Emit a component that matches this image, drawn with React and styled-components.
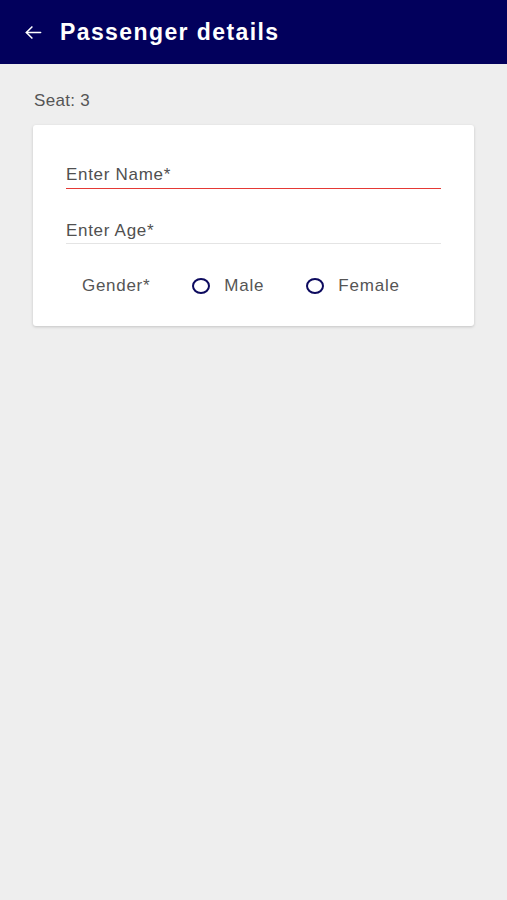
import React from "react";
import styled, { createGlobalStyle } from "styled-components";

const GlobalStyle = createGlobalStyle`
    html, body {
        margin: 0;
        padding: 0;
        background: #eeeeee;
        font-family: "Liberation Sans", Arial, sans-serif;
    }
`;

const Page = styled.div`
    min-height: 900px;
    background: #eeeeee;
`;

const Header = styled.header`
    height: 64px;
    background: #02005c;
    display: flex;
    align-items: center;
    padding: 0 0 0 23px;
    gap: 17px;
    color: #ffffff;
`;

const BackButton = styled.button`
    background: none;
    border: none;
    padding: 0;
    width: 20px;
    height: 22px;
    display: flex;
    align-items: center;
    justify-content: center;
    color: #ffffff;
`;

const Title = styled.h1`
    margin: 0;
    padding-top: 1px;
    font-family: "Liberation Sans", Arial, sans-serif;
    font-size: 23px;
    font-weight: 700;
    letter-spacing: 1.4px;
`;

const Content = styled.main`
    padding: 27px 33px;
`;

const SeatLabel = styled.div`
    font-size: 17px;
    line-height: 20px;
    color: #555555;
    letter-spacing: 0.3px;
    margin: 0 0 14px 1px;
`;

const Card = styled.section`
    background: #ffffff;
    border-radius: 3px;
    box-shadow: 0 1px 3px rgba(0, 0, 0, 0.18);
    padding: 40px 33px 30px 33px;
    display: flex;
    flex-direction: column;
`;

const Field = styled.div`
    border-bottom: ${(p) => (p.error ? "1.5px solid #e53935" : "1px solid #e4e4e4")};
    padding-bottom: ${(p) => (p.error ? 3 : 2)}px;
    margin-bottom: ${(p) => p.gap || 0}px;
`;

const FieldInput = styled.input`
    display: block;
    border: none;
    outline: none;
    padding: 0;
    width: 100%;
    height: 20px;
    line-height: 20px;
    font-family: "Liberation Sans", Arial, sans-serif;
    font-size: 17px;
    letter-spacing: 0.7px;
    color: #444444;
    background: transparent;

    &::placeholder {
        color: #505050;
    }
`;

const GenderRow = styled.div`
    display: flex;
    align-items: center;
    height: 20px;
    padding-left: 16px;
    margin-top: 32px;
`;

const GenderLabel = styled.span`
    font-size: 17px;
    letter-spacing: 0.7px;
    color: #555555;
    margin-right: 42px;
`;

const RadioOption = styled.label`
    display: flex;
    align-items: center;
    gap: 14px;
    font-size: 17px;
    letter-spacing: 0.8px;
    color: #555555;
    margin-right: 42px;
`;

const RadioCircle = styled.span`
    width: 14px;
    height: 12px;
    border: 2.5px solid #0c0a5e;
    border-radius: 50%;
`;

export default function App() {
    return (
        <Page>
            <GlobalStyle />
            <Header>
                <BackButton aria-label="Back">
                    <svg width="19" height="19" viewBox="0 0 24 24" fill="none" stroke="currentColor" strokeWidth="2" strokeLinecap="round" strokeLinejoin="round">
                        <path d="M21 12H3" />
                        <path d="M10 5l-7 7 7 7" />
                    </svg>
                </BackButton>
                <Title>Passenger details</Title>
            </Header>
            <Content>
                <SeatLabel>Seat: 3</SeatLabel>
                <Card>
                    <Field error gap={32}>
                        <FieldInput placeholder="Enter Name*" />
                    </Field>
                    <Field>
                        <FieldInput placeholder="Enter Age*" />
                    </Field>
                    <GenderRow>
                        <GenderLabel>Gender*</GenderLabel>
                        <RadioOption>
                            <RadioCircle />
                            Male
                        </RadioOption>
                        <RadioOption>
                            <RadioCircle />
                            Female
                        </RadioOption>
                    </GenderRow>
                </Card>
            </Content>
        </Page>
    );
}
